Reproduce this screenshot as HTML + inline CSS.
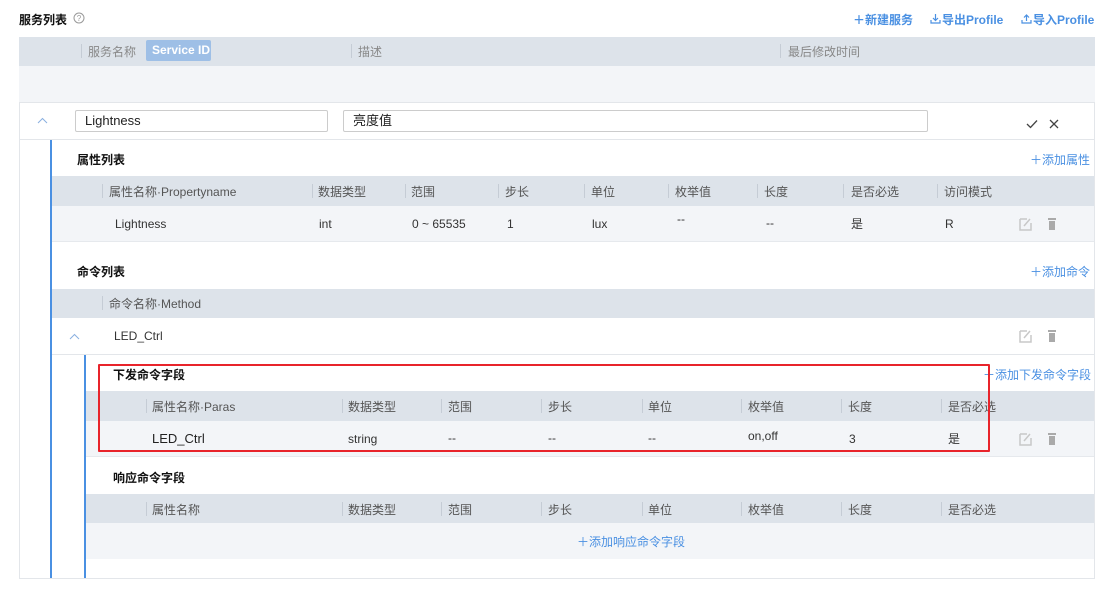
<!DOCTYPE html>
<html><head><meta charset="utf-8"><style>
*{margin:0;padding:0;box-sizing:border-box}
body{width:1109px;height:596px;background:#fff;position:relative;overflow:hidden;font-family:"Liberation Sans","Noto Sans CJK SC",sans-serif;font-size:12px;color:#333}
.a{position:absolute;white-space:nowrap}
.hd{background:#dde3ea}
.lt{background:#f3f5f8}
.sep{position:absolute;width:1px;height:14px;background:#c5ccd5}
.g{color:#555}
.b{font-weight:bold;color:#111}
.blue{color:#4a90e2}
</style></head><body>
<div class="a b" style="left:19px;top:11px;font-size:12px">服务列表</div>
<svg class="a" style="left:73px;top:12px" width="12" height="12" viewBox="0 0 12 12"><circle cx="6" cy="6" r="5" fill="none" stroke="#999"/><text x="6" y="9" font-size="8" text-anchor="middle" fill="#999" font-family="Liberation Sans">?</text></svg>
<div class="a blue" style="left:853px;top:11px;font-weight:bold">＋新建服务</div>
<svg class="a" style="left:930px;top:13px" width="11" height="11" viewBox="0 0 11 11"><path d="M5.5 1v6M3 5l2.5 2.5L8 5M1 7v3h9V7" fill="none" stroke="#4a90e2" stroke-width="1.2"/></svg>
<div class="a blue" style="left:942px;top:11px;font-weight:bold">导出Profile</div>
<svg class="a" style="left:1021px;top:13px" width="11" height="11" viewBox="0 0 11 11"><path d="M5.5 8V2M3 4.5L5.5 2L8 4.5M1 7v3h9V7" fill="none" stroke="#4a90e2" stroke-width="1.2"/></svg>
<div class="a blue" style="left:1033px;top:11px;font-weight:bold">导入Profile</div>

<div class="a" style="left:19px;top:37px;width:1076px;height:542px;border:1px solid #e3e6ea;border-top:none"></div>
<div class="a hd" style="left:19px;top:37px;width:1076px;height:29px"></div>
<div class="sep" style="left:81px;top:44px"></div>
<div class="a g" style="left:88px;top:43px;color:#888">服务名称</div>
<div class="a" style="left:146px;top:40px;width:65px;height:21px;background:#9ebfe6;border-radius:2px;color:#fff;font-weight:bold;line-height:21px;padding-left:6px">Service ID</div>
<div class="sep" style="left:351px;top:44px"></div>
<div class="a" style="left:358px;top:43px;color:#888">描述</div>
<div class="sep" style="left:780px;top:44px"></div>
<div class="a" style="left:788px;top:43px;color:#888">最后修改时间</div>
<div class="a lt" style="left:19px;top:66px;width:1076px;height:36px"></div>
<div class="a" style="left:19px;top:102px;width:1076px;height:1px;background:#e3e6ea"></div>
<div class="a" style="left:19px;top:139px;width:1076px;height:1px;background:#e3e6ea"></div>
<svg class="a" style="left:37px;top:117px" width="11" height="7" viewBox="0 0 11 7"><path d="M1 6l4.5-4.5L10 6" fill="none" stroke="#8ab0e0" stroke-width="1"/></svg>
<div class="a" style="left:75px;top:110px;width:253px;height:22px;border:1px solid #ccc;border-radius:2px;padding-left:9px;line-height:20px;color:#222;font-size:13px">Lightness</div>
<div class="a" style="left:343px;top:110px;width:585px;height:22px;border:1px solid #ccc;border-radius:2px;padding-left:9px;line-height:20px;color:#222;font-size:13px">亮度值</div>
<svg class="a" style="left:1026px;top:119px" width="12" height="10" viewBox="0 0 12 10"><path d="M1 5l3.5 3.5L11 1.5" fill="none" stroke="#444" stroke-width="1.3"/></svg>
<svg class="a" style="left:1049px;top:119px" width="10" height="10" viewBox="0 0 10 10"><path d="M1 1l8 8M9 1L1 9" fill="none" stroke="#444" stroke-width="1.3"/></svg>

<div class="a" style="left:50px;top:140px;width:2px;height:438px;background:#4a90e2"></div>

<div class="a b" style="left:77px;top:151px">属性列表</div>
<div class="a blue" style="left:1030px;top:151px">＋添加属性</div>
<div class="a hd" style="left:52px;top:176px;width:1042px;height:30px"></div>
<div class="sep" style="left:102px;top:184px"></div><div class="a g" style="left:109px;top:183px">属性名称·Propertyname</div>
<div class="sep" style="left:312px;top:184px"></div><div class="a g" style="left:318px;top:183px">数据类型</div>
<div class="sep" style="left:405px;top:184px"></div><div class="a g" style="left:411px;top:183px">范围</div>
<div class="sep" style="left:498px;top:184px"></div><div class="a g" style="left:505px;top:183px">步长</div>
<div class="sep" style="left:584px;top:184px"></div><div class="a g" style="left:591px;top:183px">单位</div>
<div class="sep" style="left:668px;top:184px"></div><div class="a g" style="left:675px;top:183px">枚举值</div>
<div class="sep" style="left:757px;top:184px"></div><div class="a g" style="left:764px;top:183px">长度</div>
<div class="sep" style="left:843px;top:184px"></div><div class="a g" style="left:851px;top:183px">是否必选</div>
<div class="sep" style="left:937px;top:184px"></div><div class="a g" style="left:944px;top:183px">访问模式</div>
<div class="a lt" style="left:52px;top:206px;width:1042px;height:36px;border-bottom:1px solid #e6e9ed"></div>
<div class="a" style="left:115px;top:217px">Lightness</div>
<div class="a" style="left:319px;top:217px">int</div>
<div class="a" style="left:412px;top:217px">0 ~ 65535</div>
<div class="a" style="left:507px;top:217px">1</div>
<div class="a" style="left:592px;top:217px">lux</div>
<div class="a" style="left:677px;top:212px">--</div>
<div class="a" style="left:766px;top:216px">--</div>
<div class="a" style="left:851px;top:215px">是</div>
<div class="a" style="left:945px;top:217px">R</div>

<div class="a b" style="left:77px;top:263px">命令列表</div>
<div class="a blue" style="left:1030px;top:263px">＋添加命令</div>
<div class="a hd" style="left:52px;top:289px;width:1042px;height:29px"></div>
<div class="sep" style="left:102px;top:296px"></div><div class="a g" style="left:109px;top:295px">命令名称·Method</div>
<div class="a" style="left:52px;top:354px;width:1042px;height:1px;background:#e3e6ea"></div>
<svg class="a" style="left:69px;top:333px" width="11" height="7" viewBox="0 0 11 7"><path d="M1 6l4.5-4.5L10 6" fill="none" stroke="#8ab0e0" stroke-width="1"/></svg>
<div class="a" style="left:114px;top:329px">LED_Ctrl</div>

<div class="a" style="left:84px;top:355px;width:2px;height:223px;background:#4a90e2"></div>

<div class="a b" style="left:113px;top:366px">下发命令字段</div>
<div class="a blue" style="left:983px;top:366px">＋添加下发命令字段</div>
<div class="a hd" style="left:86px;top:391px;width:1008px;height:30px"></div>
<div class="a lt" style="left:86px;top:421px;width:1008px;height:36px;border-bottom:1px solid #e6e9ed"></div>

<div class="a b" style="left:113px;top:469px">响应命令字段</div>
<div class="a hd" style="left:86px;top:494px;width:1008px;height:29px"></div>
<div class="a lt" style="left:86px;top:523px;width:1008px;height:36px"></div>
<div class="a blue" style="left:577px;top:533px">＋添加响应命令字段</div>

<div class="sep" style="left:146px;top:399px"></div><div class="a g" style="left:152px;top:398px">属性名称·Paras</div>
<div class="sep" style="left:342px;top:399px"></div><div class="a g" style="left:348px;top:398px">数据类型</div>
<div class="sep" style="left:441px;top:399px"></div><div class="a g" style="left:448px;top:398px">范围</div>
<div class="sep" style="left:541px;top:399px"></div><div class="a g" style="left:548px;top:398px">步长</div>
<div class="sep" style="left:642px;top:399px"></div><div class="a g" style="left:648px;top:398px">单位</div>
<div class="sep" style="left:741px;top:399px"></div><div class="a g" style="left:748px;top:398px">枚举值</div>
<div class="sep" style="left:841px;top:399px"></div><div class="a g" style="left:848px;top:398px">长度</div>
<div class="sep" style="left:941px;top:399px"></div><div class="a g" style="left:948px;top:398px">是否必选</div>

<div class="a" style="left:152px;top:431px;color:#222;font-size:13px">LED_Ctrl</div>
<div class="a" style="left:348px;top:432px">string</div>
<div class="a" style="left:448px;top:431px">--</div>
<div class="a" style="left:548px;top:431px">--</div>
<div class="a" style="left:648px;top:431px">--</div>
<div class="a" style="left:748px;top:429px">on,off</div>
<div class="a" style="left:849px;top:432px">3</div>
<div class="a" style="left:948px;top:430px">是</div>

<div class="sep" style="left:146px;top:502px"></div><div class="a g" style="left:152px;top:501px">属性名称</div>
<div class="sep" style="left:342px;top:502px"></div><div class="a g" style="left:348px;top:501px">数据类型</div>
<div class="sep" style="left:441px;top:502px"></div><div class="a g" style="left:448px;top:501px">范围</div>
<div class="sep" style="left:541px;top:502px"></div><div class="a g" style="left:548px;top:501px">步长</div>
<div class="sep" style="left:642px;top:502px"></div><div class="a g" style="left:648px;top:501px">单位</div>
<div class="sep" style="left:741px;top:502px"></div><div class="a g" style="left:748px;top:501px">枚举值</div>
<div class="sep" style="left:841px;top:502px"></div><div class="a g" style="left:848px;top:501px">长度</div>
<div class="sep" style="left:941px;top:502px"></div><div class="a g" style="left:948px;top:501px">是否必选</div>

<svg class="a" style="left:1019px;top:217px" width="40" height="14" viewBox="0 0 40 14"><path d="M1 2h7M1 2v11h11V6" fill="none" stroke="#c8c8c8" stroke-width="1.5"/><path d="M5 9l6-7" stroke="#c8c8c8" stroke-width="1.5"/><rect x="29" y="1" width="8" height="2" fill="#aaa"/><rect x="30" y="4" width="6" height="9" fill="#aaa"/></svg>
<svg class="a" style="left:1019px;top:329px" width="40" height="14" viewBox="0 0 40 14"><path d="M1 2h7M1 2v11h11V6" fill="none" stroke="#c8c8c8" stroke-width="1.5"/><path d="M5 9l6-7" stroke="#c8c8c8" stroke-width="1.5"/><rect x="29" y="1" width="8" height="2" fill="#aaa"/><rect x="30" y="4" width="6" height="9" fill="#aaa"/></svg>
<svg class="a" style="left:1019px;top:432px" width="40" height="14" viewBox="0 0 40 14"><path d="M1 2h7M1 2v11h11V6" fill="none" stroke="#c8c8c8" stroke-width="1.5"/><path d="M5 9l6-7" stroke="#c8c8c8" stroke-width="1.5"/><rect x="29" y="1" width="8" height="2" fill="#aaa"/><rect x="30" y="4" width="6" height="9" fill="#aaa"/></svg>

<div class="a" style="left:98px;top:364px;width:892px;height:88px;border:2px solid #e8242b;border-radius:1px"></div>
</body></html>
